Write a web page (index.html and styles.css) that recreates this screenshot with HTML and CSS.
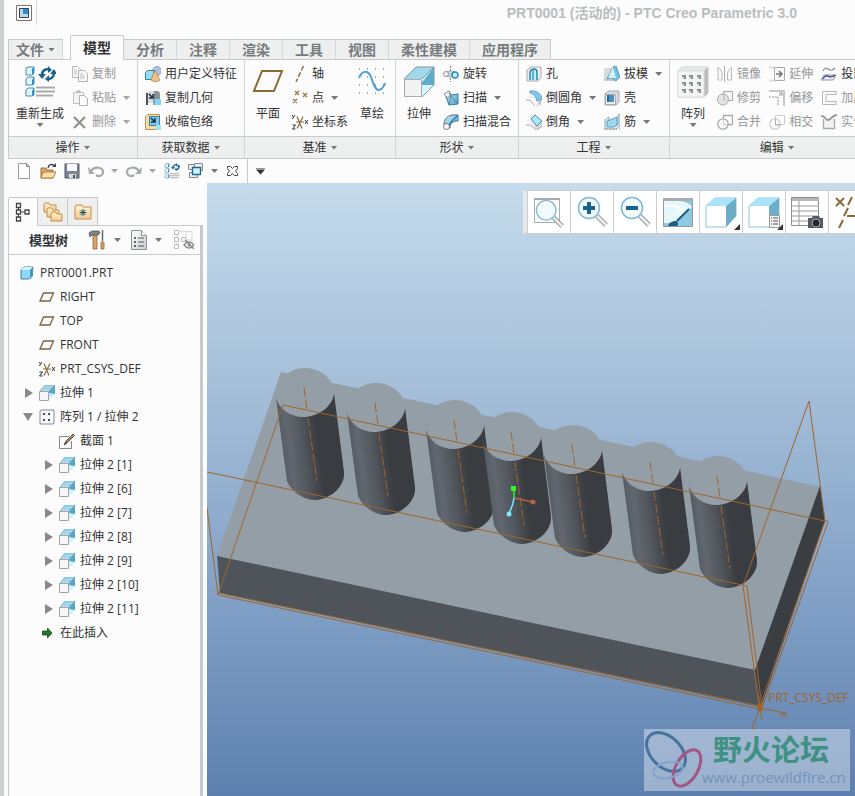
FILE: index.html
```html
<!DOCTYPE html>
<html lang="zh-CN">

<head>
    <meta charset="UTF-8">
    <meta name="viewport" content="width=device-width, initial-scale=1.0">
    <title>PRT0001 (活动的) - PTC Creo Parametric 3.0</title>
    <link rel="stylesheet" href="styles.css">
</head>

<body>
    <!-- Icon sprite -->
    <svg class="sprite" aria-hidden="true">
        <defs>
            <linearGradient id="blue-face" x1="0" y1="0" x2="1" y2="1">
                <stop offset="0" stop-color="#d4f1fb" />
                <stop offset="1" stop-color="#4a9fc4" />
            </linearGradient>
            <linearGradient id="grey-face" x1="0" y1="0" x2="1" y2="1">
                <stop offset="0" stop-color="#ffffff" />
                <stop offset="1" stop-color="#c9cdd0" />
            </linearGradient>
            <linearGradient id="folder-face" x1="0" y1="0" x2="0" y2="1">
                <stop offset="0" stop-color="#fff4d4" />
                <stop offset="1" stop-color="#f0c98c" />
            </linearGradient>

            <symbol id="i-app" viewBox="0 0 16 16"><path d="M.5.5h15v15H.5z" fill="#fff" stroke="#86706f" /><path d="M3.500 3.500h9v9h-9z" fill="#2b8fc5" stroke="#32475a" /><path d="M4 4h3v5h5v3H4z" fill="#c5d5e8" /></symbol>
            <symbol id="i-cube" viewBox="0 0 16 16"><path d="M2 5l3-3h9l-1 9-3 3H2z" fill="#8fd8fa" stroke="#3c7f9e" /><path d="M2 5h9l3-3H5z" fill="#d5f3ff" /><path d="M11 5l3-3v9l-3 3z" fill="#3d9bc8" /></symbol>
            <symbol id="i-extrude" viewBox="0 0 16 16"><path d="M0 6l6-6h10v9l-6 6z" fill="#cdf1fb" /><path d="M6 0h10l-5 5.500H1z" fill="#9ed4ea" /><path d="M10 6l6-6v9l-6-1z" fill="#57a7c9" /><path d="M10 6l6-6v9M1 6l5-6h10" fill="none" stroke="#7f9da8" stroke-width=".6" /><path d="M.5 6.500h9v9h-9z" fill="#f6f6f6" stroke="#a4a4a4" /></symbol>
            <symbol id="i-plane" viewBox="0 0 16 12"><path d="M4.500 2h10l-3.500 8H1z" fill="none" stroke="#7e6039" stroke-width="1.300" /></symbol>
            <symbol id="i-plane-lg" viewBox="0 0 32 32"><path d="M10 5h20l-8 20H2z" fill="none" stroke="#8a6a35" stroke-width="2" /></symbol>
            <symbol id="i-csys" viewBox="0 0 16 16"><path d="M4 8h8M5 2.500l5 12M11 2.500l-6 12" stroke="#8a6c3c" stroke-width="1.200" /><path d="M0 1l1.500 2L3 1M1.500 3L.5 5M13 6l3 4m0-4l-3 4M.5 11h3l-3 4h3" fill="none" stroke="#333" /></symbol>
            <symbol id="i-regen-lg" viewBox="0 0 32 32"><g fill="#dff5fd" stroke="#4f8aa3"><path d="M2 2l2-1h6v6l-2 2H2zM2 13l2-2h6v7l-2 1H2zM2 24l2-2h6v7l-2 1H2z" /></g><path d="M8 3l2-2v6l-2 2zM8 14l2-3v7l-2 1zM8 25l2-3v7l-2 1z" fill="#2f91bc" /><path d="M18 9c0-4 3-6 7-6M30 7c0 4-3 6-6 6" fill="none" stroke="#1c628b" stroke-width="2.500" /><path d="M14 8h8l-4 5zM24 0v7l4-3zM26 8h7l-3-5zM25 9v7l-4-3z" fill="#1c628b" /><path d="M12 21.500h19M12 25.500h19M12 29.500h17" stroke="#aaa" stroke-width="2" /></symbol>
            <symbol id="i-copy" viewBox="0 0 16 16"><g fill="#fbfbfb" stroke="#b5b5b5"><path d="M.5.5h5l3 3v8h-8z" /><path d="M6.500 4.500h6l3 3v8h-9z" /></g><path d="M8 8h3m-3 2h5m-5 2h5M2 4h3M2 6h3M2 8h3" stroke="#bbb" /></symbol>
            <symbol id="i-paste" viewBox="0 0 16 16"><path d="M1.500 2.500h10v11h-10z" fill="#f4f4f4" stroke="#c1c1c1" /><path d="M4 3c0-4 5-4 5 0z" fill="#bbb" /><path d="M7.500 5.500h5l3 3v7h-8z" fill="#fff" stroke="#b5b5b5" /></symbol>
            <symbol id="i-delete" viewBox="0 0 16 16"><path d="M2 3l11 11M13 3L2 14" stroke="#909090" stroke-width="2.200" /></symbol>
            <symbol id="i-udf" viewBox="0 0 16 16"><circle cx="12" cy="5" r="4.500" fill="#a9c3e4" stroke="#7892b5" stroke-width=".7" /><path d="M.5 6.500l2-2H9v8l-2 1H.5z" fill="#93dcf5" stroke="#3c819c" /><path d="M10 4l5 10c-2 2-7 2-9 0z" fill="#efc189" stroke="#a3794c" stroke-width=".7" /></symbol>
            <symbol id="i-copygeom" viewBox="0 0 16 16"><path d="M1 3l3-2h9v6l-3 6H1z" fill="#d9dbde" /><path d="M1 3h2v12H1z" fill="#4a4f58" /><path d="M4 4l4 4m0-4v4H4" fill="none" stroke="#1f2b38" stroke-width="1.500" /><path d="M9 1h4l2 2v6H9z" fill="#8d929a" /><path d="M10 9h6v6h-6z" fill="#7ed5f5" /><path d="M9 4v11" stroke="#31607a" /></symbol>
            <symbol id="i-shrink" viewBox="0 0 16 16"><path d="M.5 2.500l2-2h12v12l-3 3H.5z" fill="#f6dba3" stroke="#b6955c" /><path d="M4.500 2.500h10v9h-10z" fill="#7ec8e8" stroke="#3b7ea5" /><path d="M6 4l4 4m0-4v4H6" fill="none" stroke="#16324a" stroke-width="1.500" /><path d="M11 11h5v5h-5z" fill="#9be4fb" /></symbol>
            <symbol id="i-axis" viewBox="0 0 16 16"><path d="M11.500 0L4 16" stroke="#8a6a35" stroke-width="1.400" stroke-dasharray="5 2" /></symbol>
            <symbol id="i-point" viewBox="0 0 16 16"><path d="M3 1l4 4m0-4L3 5M11 3l4 4m0-4l-4 4M1 9l4 4m0-4l-4 4" stroke="#9b773d" stroke-width="1.400" /></symbol>
            <symbol id="i-sketch" viewBox="0 0 32 32"><path d="M3 3h26M3 11h26M3 19h26M3 27h26" stroke="#555" stroke-dasharray="1 7" /><path d="M3 12C6 4 12 4 15 11C18 19 19 23 22 24C25 24 28 21 29 17" fill="none" stroke="#4a9edb" stroke-width="2" /></symbol>
            <symbol id="i-extrude-lg" viewBox="0 0 32 32"><path d="M1 13L13 1h18v18L19 31H1z" fill="#d8f5fc" /><path d="M13 1h18L19 13H1z" fill="#a2d8ec" /><path d="M31 1L17 19h14z" fill="#5eaaca" /><path d="M13 1h18v18L19 31M1 13L13 1M31 1L19 13" fill="none" stroke="#7b99a7" /><path d="M1.500 13.500h17v17h-17z" fill="#f3f3f3" stroke="#aaa" /></symbol>
            <symbol id="i-revolve" viewBox="0 0 16 16"><path d="M7.500 0v16" stroke="#888" stroke-dasharray="2 1" /><ellipse cx="7" cy="8" rx="6" ry="3" fill="#c7d2dc" stroke="#a6aeb4" /><circle cx="3" cy="8" r="2.500" fill="#f4f4f4" stroke="#999" /><circle cx="12" cy="9" r="3" fill="#c2effb" stroke="#3690b3" stroke-width="1.500" /></symbol>
            <symbol id="i-sweep" viewBox="0 0 16 16"><path d="M2 4l4-3 2 4 7-1v10l-9 1z" fill="url(#blue-face)" stroke="#347c9f" /><path d="M1 4l5-3 1 4-2 3z" fill="#f4f4f4" stroke="#8a979d" /><path d="M8 5l-2 10M15 14L8 6" fill="none" stroke="#4a8aa6" /></symbol>
            <symbol id="i-blend" viewBox="0 0 16 16"><path d="M1 11C1 4 6 1 10 1h5v6C10 7 7 9 7 14z" fill="url(#blue-face)" stroke="#536f7b" /><path d="M15 1l-6 6-4 6" fill="none" stroke="#2b88b0" stroke-width="1.500" /><circle cx="3.500" cy="12.500" r="3" fill="#f7f7f7" stroke="#777" /></symbol>
            <symbol id="i-hole" viewBox="0 0 16 16"><path d="M1 4l4-3h10v10l-3 4H1z" fill="#eee" stroke="#a4a8aa" /><path d="M4 14V6c1-4 7-4 7 0v8" fill="#c7eefa" stroke="#2d85ab" stroke-width="1.500" /><path d="M7 4v10" stroke="#5cadd0" stroke-width="2" /></symbol>
            <symbol id="i-round" viewBox="0 0 16 16"><path d="M1 1h7l7 7v8L8 8H1z" fill="url(#grey-face)" /><path d="M4 1c6-1 11 2 12 8l-5 2C10 6 8 4 4 3z" fill="#80c7ed" stroke="#4a8eb5" stroke-width=".7" /><path d="M0 10h4l5 6M16 10l-5 6" fill="none" stroke="#aaa" /></symbol>
            <symbol id="i-chamfer" viewBox="0 0 16 16"><path d="M1 1h7l7 7v4l-4 4-8-8H1z" fill="url(#grey-face)" /><path d="M5 5l4-4 7 6-5 5z" fill="#a9e7fa" stroke="#538ba2" /><path d="M0 11h4l6 5M16 8v4l-5 4" fill="none" stroke="#aaa" /></symbol>
            <symbol id="i-draft" viewBox="0 0 16 16"><path d="M0 2h8l-3 11H0z" fill="#d8dadb" /><path d="M9 1l3-1 4 11-4 4-5-3-4 1z" fill="#74c0e3" stroke="#3580a3" stroke-width=".7" /><path d="M9 1L4 12h8z" fill="#d3f1fb" /><path d="M0 14h10" stroke="#999" /></symbol>
            <symbol id="i-shell" viewBox="0 0 16 16"><path d="M1 4l3-3h11v11l-3 3H1z" fill="#d6dadd" stroke="#a3abb0" /><path d="M1.500 4.500h10v10h-10z" fill="#eee" stroke="#aaa" /><path d="M3 5h7v7H3z" fill="#4a8fbe" /><path d="M3 5h2v7H3z" fill="#2a6795" /></symbol>
            <symbol id="i-rib" viewBox="0 0 16 16"><path d="M1 6l4-3v8h9V1l2-1v12l-4 3H1z" fill="#dff2f8" stroke="#849197" stroke-width=".8" /><path d="M3 7l3-1 7-3v8l-3 2H3z" fill="#9bdaf0" stroke="#408eae" stroke-width=".8" /><path d="M0 15h16" stroke="#888" stroke-dasharray="1 2" /></symbol>
            <symbol id="i-pattern-lg" viewBox="0 0 32 32"><path d="M1 5l4-4h26v26l-4 4H1z" fill="#b9bdbd" stroke="#c3c3c3" /><path d="M1 5l4-4h26l-4 4z" fill="#e7e8e8" /><path d="M1 5h26v26H1z" fill="#f3f4f4" stroke="#ddd" /><g fill="#8b9093"><path d="M5 9h4v4H5zM12 9h4v4h-4zM20 9h4v4h-4zM5 16h4v4H5zM12 16h4v4h-4zM20 16h4v4h-4zM5 23h4v4H5zM12 23h4v4h-4zM20 23h4v4h-4z" /></g><g fill="#d9d9d9"><path d="M5 11h2v2H5zM12 11h2v2h-2zM20 11h2v2h-2zM5 18h2v2H5zM12 18h2v2h-2zM20 18h2v2h-2zM5 25h2v2H5zM12 25h2v2h-2zM20 25h2v2h-2z" /></g></symbol>
            <symbol id="i-mirror" viewBox="0 0 16 16"><path d="M7.500 0v16" stroke="#aaa" /><path d="M1 1v13h4V8c0-3-2-5-4-7zM14.500 1v13h-4V8c0-3 2-5 4-7z" fill="#fafafa" stroke="#bbb" /></symbol>
            <symbol id="i-trim" viewBox="0 0 16 16"><path d="M6.500 1.500h9v9h-9z" fill="#f7f7f7" stroke="#aaa" /><circle cx="6" cy="9.500" r="5.500" fill="#ddd" fill-opacity=".7" stroke="#aaa" /><path d="M7 10V2" stroke="#bbb" /></symbol>
            <symbol id="i-merge" viewBox="0 0 16 16"><path d="M6.500 1.500h9v9h-9z" fill="#fff" stroke="#aaa" stroke-width="1.300" /><circle cx="6" cy="10" r="5.200" fill="#fff" fill-opacity=".5" stroke="#aaa" stroke-width="1.300" /></symbol>
            <symbol id="i-extend" viewBox="0 0 16 16"><path d="M0 1.500h6M0 14.500h6" stroke="#ddd" stroke-width="2" /><path d="M5.500 1.500h10v13h-10z" fill="#fafafa" stroke="#aaa" /><path d="M7 8h5M10 5l3 3-3 3" fill="none" stroke="#777" stroke-width="1.500" /></symbol>
            <symbol id="i-offset" viewBox="0 0 16 16"><path d="M0 1h15v15" fill="none" stroke="#b5b5b5" stroke-width="1.500" /><path d="M0 7h9v9" fill="none" stroke="#999" stroke-dasharray="2 1" /><path d="M10 6l3-3m-3 0h3v3" fill="none" stroke="#999" /></symbol>
            <symbol id="i-intersect" viewBox="0 0 16 16"><path d="M6.500 1.500h9v9h-9z" fill="#fff" stroke="#ccc" /><circle cx="6" cy="10" r="5.200" fill="none" stroke="#ccc" stroke-width="1.300" /><path d="M6.500 5v6h5" fill="none" stroke="#aaa" /></symbol>
            <symbol id="i-project" viewBox="0 0 16 16"><path d="M2 5c4-8 6 4 12-3" fill="none" stroke="#8f8f8f" stroke-width="1.300" /><path d="M0 14l3-5h12l-3 5z" fill="#eef1f9" stroke="#7b7881" stroke-width=".8" /><path d="M2 13c4-8 6 2 12-4" fill="none" stroke="#4a4890" stroke-width="1.300" /></symbol>
            <symbol id="i-thicken" viewBox="0 0 16 16"><path d="M15 1.500H1.500v13H15M15 4.500H5v7h10M15 1v4m0 6v4" fill="none" stroke="#b7b7b7" /></symbol>
            <symbol id="i-solidify" viewBox="0 0 16 16"><path d="M2.500 5v9.500h11V5" fill="#f2f2f2" stroke="#aaa" stroke-width="1.300" /><path d="M0 2c4-1 4 4 7 4s4-5 9-5" fill="none" stroke="#999" stroke-width="2" /></symbol>
            <symbol id="i-new" viewBox="0 0 16 16"><path d="M2.500.5h8l3 3v12h-11z" fill="#fff" stroke="#999" /><path d="M10.500.5v3h3" fill="none" stroke="#777" /></symbol>
            <symbol id="i-open" viewBox="0 0 16 16"><path d="M1 5h5l1 2h6v8H1z" fill="#d9a868" stroke="#9b7340" /><path d="M3 9h13l-3 6H1z" fill="#ffdda7" stroke="#ae8049" /><path d="M8 5c1-4 3-4 6-3" fill="none" stroke="#445" stroke-width="1.500" /><path d="M12 4h4V0z" fill="#445" /></symbol>
            <symbol id="i-save" viewBox="0 0 16 16"><path d="M1 1h14v14H1z" fill="#7b8791" stroke="#505b67" /><path d="M3 1h10v7H3z" fill="#f7f7f8" /><path d="M5 11h7v4H5z" fill="#d7dbe0" /><path d="M9 12h2v3H9z" fill="#485362" /></symbol>
            <symbol id="i-undo" viewBox="0 0 16 16"><path d="M3 8c3-5 12-4 12 1 0 4-4 5-7 3" fill="none" stroke="#a3a8ac" stroke-width="2.200" /><path d="M0 4l1 7h6z" fill="#a3a8ac" /></symbol>
            <symbol id="i-redo" viewBox="0 0 16 16"><path d="M13 8C10 3 1 4 1 9c0 4 4 5 7 3" fill="none" stroke="#a3a8ac" stroke-width="2.200" /><path d="M16 4l-1 7H9z" fill="#a3a8ac" /></symbol>
            <symbol id="i-windows" viewBox="0 0 16 16"><path d="M6.500.5h8v7h-8zM.5 1.500h6v5h-6zM1.500 9.500h8v5h-8z" fill="#eee" stroke="#888" /><path d="M4.500 4.500h8v7h-8z" fill="#d3f0fb" stroke="#22678f" stroke-width="1.300" /></symbol>
            <symbol id="i-close" viewBox="0 0 13 16"><path d="M1.500 3.500h3l2 2 2-2h3v2l-2 2.500 2 2.500v2h-3l-2-2-2 2h-3v-2l2-2.500-2-2.500z" fill="#fff" stroke="#444" /></symbol>
            <symbol id="i-tree" viewBox="0 0 16 20"><path d="M3.500 5v10M4 10h8" stroke="#444" /><g fill="#fff" stroke="#444" stroke-width="1.300"><path d="M1.500 1.500h4v4h-4zM1.500 8h4v4h-4zM1.500 15h4v4h-4zM10 8h4v4h-4z" /></g></symbol>
            <symbol id="i-folders" viewBox="0 0 20 20"><g fill="url(#folder-face)" stroke="#c78b4c"><path d="M1 2l1-1h4l1 2h6v7H1z" /><path d="M4 7l1-1h4l1 2h6v7H4z" /><path d="M8 12l1-2h4l1 2h5v7H8z" /></g></symbol>
            <symbol id="i-favourites" viewBox="0 0 20 20"><path d="M2 5l1-2h6l1 2h8v12H2z" fill="url(#folder-face)" stroke="#c78b4c" /><path d="M10 7v7M6.500 10.500h7M7.500 8l5 5m0-5l-5 5" stroke="#17547a" /></symbol>
            <symbol id="i-tools" viewBox="0 0 20 20"><path d="M5 5h4v14H5z" fill="#dca363" stroke="#91683e" stroke-width=".8" /><path d="M1 3l3-2h7l1 2-2 2H4L2 7z" fill="#7e858c" stroke="#555" stroke-width=".8" /><path d="M14.500 0v11" stroke="#666" stroke-width="1.500" /><path d="M13 12h3v7h-3z" fill="#dca363" stroke="#91683e" stroke-width=".8" /></symbol>
            <symbol id="i-list" viewBox="0 0 16 20"><path d="M.5.5h10l5 5v14H.5z" fill="url(#grey-face)" stroke="#8c9298" /><path d="M10.500.5v5h5" fill="#fff" stroke="#8c9298" /><path d="M7 8h6M7 12h6M7 16h6" stroke="#555" /><path d="M3 7h2v2H3zM3 11h2v2H3zM3 15h2v2H3z" fill="#666" /></symbol>
            <symbol id="i-hide" viewBox="0 0 20 20"><path d="M3 4v13M4 9h5M6 1.500h12M7 10h11M12 1v12M18 1v10" fill="none" stroke="#ccc" stroke-dasharray="2 1" /><path d="M.5.500h4v4h-4zM.5 7.500h4v4h-4zM.5 14.500h4v4h-4zM8 7.500h4v4H8z" fill="#fff" stroke="#bbb" /><path d="M10 15c3-4 7-4 10 0-3 4-7 4-10 0zM11 10l9 9" fill="none" stroke="#888" stroke-width="1.300" /><circle cx="15" cy="15" r="1.500" fill="#888" /></symbol>
            <symbol id="i-pattern" viewBox="0 0 16 16"><path d="M1 2l1-1h13v13l-1 1H1z" fill="#fafafa" stroke="#8887a0" /><path d="M4 4h2v2H4zM9 4h2v2H9zM4 10h2v2H4zM9 10h2v2H9z" fill="#4d4b66" /></symbol>
            <symbol id="i-section" viewBox="0 0 16 16"><path d="M10 3.500H.5v12h12V8" fill="none" stroke="#888" /><path d="M5 12l2-4 7-7 1.500 1.500-7 7z" fill="#b58f5f" stroke="#464646" stroke-width=".9" /><path d="M5 12l2-3 1 1z" fill="#333" /></symbol>
            <symbol id="i-insert" viewBox="-3 -2 16 16"><path d="M.5 4h5V1l4.500 5-4.500 5V8h-5z" fill="#267226" stroke="#174e17" stroke-width=".8" /></symbol>
            <symbol id="i-glass" viewBox="0 0 32 32"><path d="M21 20l9 9" stroke="#9ca1a6" stroke-width="5" /><path d="M21 20l9 9" stroke="#eee" stroke-width="2.500" /><circle cx="13" cy="12" r="10.500" fill="#eefaff" fill-opacity=".85" stroke="#82b6d3" stroke-width="1.500" /></symbol>
            <symbol id="i-refit" viewBox="0 0 32 32"><path d="M1.500 2.500h25v24h-25z" fill="#fff" stroke="#aaa" /><path d="M1 2h26v2H1z" fill="#a7abae" /><use href="#i-glass" y="3" width="32" height="30" /></symbol>
            <symbol id="i-zoomin" viewBox="0 0 32 32"><use href="#i-glass" width="32" height="32" /><path d="M7 12h12M13 6v12" stroke="#17638e" stroke-width="4" /></symbol>
            <symbol id="i-zoomout" viewBox="0 0 32 32"><use href="#i-glass" width="32" height="32" /><path d="M7 12h12" stroke="#17638e" stroke-width="4" /></symbol>
            <symbol id="i-repaint" viewBox="0 0 32 32"><path d="M1.500 2.500h29v28h-29z" fill="#8dc9e2" stroke="#929a9e" /><path d="M2 5h16c5 0 10 3 12 6L11 27H2z" fill="#e8f7fc" /><path d="M1 2h30v3H1z" fill="#a7adb0" /><path d="M3 10c10-2 16 2 20 8" fill="none" stroke="#fff" stroke-width="2" /><path d="M27 13L15 25" stroke="#1d5c84" stroke-width="2" /><path d="M6 30c2-5 6-5 8-5 3 1 2 5 1 5z" fill="#1e5d88" /></symbol>
            <symbol id="i-display" viewBox="0 0 32 32"><path d="M1 10l9-8h21v18L21 31H1z" fill="#fff" stroke="#8cc3da" /><path d="M1 10l9-8h21l-10 8z" fill="#abe4fa" /><path d="M21 10L31 2v18L21 31z" fill="#6caec9" /></symbol>
            <symbol id="i-saved" viewBox="0 0 32 32"><use href="#i-display" width="32" height="32" /><path d="M21.500 19.500h10v12h-10z" fill="#f4f4f4" stroke="#999" /><path d="M25 22h5M25 25h5M25 28h5" stroke="#555" /><path d="M23 22h1M23 25h1M23 28h1" stroke="#555" /></symbol>
            <symbol id="i-views" viewBox="0 0 32 32"><path d="M.5 1.500h27v28H.5z" fill="#fff" stroke="#8d8d8d" /><path d="M1 2h27v3H1z" fill="#b7b7b7" /><path d="M8 5v25M1 10h27M1 15h27M1 20h27M1 25h27" stroke="#999" /><path d="M17 22h4l1-2h6l1 2h3v10H17z" fill="#555a60" /><circle cx="25" cy="27" r="4" fill="#24282c" stroke="#a5abb0" /></symbol>
            <symbol id="i-datums" viewBox="0 0 32 32"><path d="M2 2l8 8m0-8l-8 8M18 1l-4 8M14 12l-4 8M9 24l-4 8M13 20h15M22 12l8 16" stroke="#8a6a35" stroke-width="2" /></symbol>
        </defs>
    </svg>

    <div class="window">
        <header class="titlebar">
            <svg class="icon"><use href="#i-app" /></svg>
            <h1>PRT0001 (活动的) - PTC Creo Parametric 3.0</h1>
        </header>

        <nav class="tabs">
            <button class="tab file">文件<span class="arrow"></span></button>
            <button class="tab active">模型</button>
            <button class="tab">分析</button>
            <button class="tab">注释</button>
            <button class="tab">渲染</button>
            <button class="tab">工具</button>
            <button class="tab">视图</button>
            <button class="tab">柔性建模</button>
            <button class="tab">应用程序</button>
        </nav>

        <div class="ribbon">
            <section class="group">
                <div class="tools">
                    <button class="big"><svg><use href="#i-regen-lg" /></svg>重新生成<span class="arrow"></span></button>
                    <div class="column">
                        <button class="tool off"><svg class="icon"><use href="#i-copy" /></svg>复制</button>
                        <button class="tool off"><svg class="icon"><use href="#i-paste" /></svg>粘贴<span class="arrow"></span></button>
                        <button class="tool off"><svg class="icon"><use href="#i-delete" /></svg>删除<span class="arrow"></span></button>
                    </div>
                </div>
                <button class="group-name">操作<span class="arrow"></span></button>
            </section>
            <section class="group">
                <div class="tools">
                    <div class="column">
                        <button class="tool"><svg class="icon"><use href="#i-udf" /></svg>用户定义特征</button>
                        <button class="tool"><svg class="icon"><use href="#i-copygeom" /></svg>复制几何</button>
                        <button class="tool"><svg class="icon"><use href="#i-shrink" /></svg>收缩包络</button>
                    </div>
                </div>
                <button class="group-name">获取数据<span class="arrow"></span></button>
            </section>
            <section class="group">
                <div class="tools">
                    <button class="big"><svg><use href="#i-plane-lg" /></svg>平面</button>
                    <div class="column">
                        <button class="tool"><svg class="icon"><use href="#i-axis" /></svg>轴</button>
                        <button class="tool"><svg class="icon"><use href="#i-point" /></svg>点<span class="arrow"></span></button>
                        <button class="tool"><svg class="icon"><use href="#i-csys" /></svg>坐标系</button>
                    </div>
                    <button class="big"><svg><use href="#i-sketch" /></svg>草绘</button>
                </div>
                <button class="group-name">基准<span class="arrow"></span></button>
            </section>
            <section class="group">
                <div class="tools">
                    <button class="big"><svg><use href="#i-extrude-lg" /></svg>拉伸</button>
                    <div class="column">
                        <button class="tool"><svg class="icon"><use href="#i-revolve" /></svg>旋转</button>
                        <button class="tool"><svg class="icon"><use href="#i-sweep" /></svg>扫描<span class="arrow"></span></button>
                        <button class="tool"><svg class="icon"><use href="#i-blend" /></svg>扫描混合</button>
                    </div>
                </div>
                <button class="group-name">形状<span class="arrow"></span></button>
            </section>
            <section class="group">
                <div class="tools">
                    <div class="column">
                        <button class="tool"><svg class="icon"><use href="#i-hole" /></svg>孔</button>
                        <button class="tool"><svg class="icon"><use href="#i-round" /></svg>倒圆角<span class="arrow"></span></button>
                        <button class="tool"><svg class="icon"><use href="#i-chamfer" /></svg>倒角<span class="arrow"></span></button>
                    </div>
                    <div class="column">
                        <button class="tool"><svg class="icon"><use href="#i-draft" /></svg>拔模<span class="arrow"></span></button>
                        <button class="tool"><svg class="icon"><use href="#i-shell" /></svg>壳</button>
                        <button class="tool"><svg class="icon"><use href="#i-rib" /></svg>筋<span class="arrow"></span></button>
                    </div>
                </div>
                <button class="group-name">工程<span class="arrow"></span></button>
            </section>
            <section class="group">
                <div class="tools">
                    <button class="big"><svg><use href="#i-pattern-lg" /></svg>阵列<span class="arrow"></span></button>
                    <div class="column">
                        <button class="tool off"><svg class="icon"><use href="#i-mirror" /></svg>镜像</button>
                        <button class="tool off"><svg class="icon"><use href="#i-trim" /></svg>修剪</button>
                        <button class="tool off"><svg class="icon"><use href="#i-merge" /></svg>合并</button>
                    </div>
                    <div class="column">
                        <button class="tool off"><svg class="icon"><use href="#i-extend" /></svg>延伸</button>
                        <button class="tool off"><svg class="icon"><use href="#i-offset" /></svg>偏移</button>
                        <button class="tool off"><svg class="icon"><use href="#i-intersect" /></svg>相交</button>
                    </div>
                    <div class="column">
                        <button class="tool"><svg class="icon"><use href="#i-project" /></svg>投影</button>
                        <button class="tool off"><svg class="icon"><use href="#i-thicken" /></svg>加厚</button>
                        <button class="tool off"><svg class="icon"><use href="#i-solidify" /></svg>实体化</button>
                    </div>
                </div>
                <button class="group-name">编辑<span class="arrow"></span></button>
            </section>
        </div>

        <div class="quickbar">
            <button aria-label="新建"><svg class="icon"><use href="#i-new" /></svg></button>
            <button aria-label="打开"><svg class="icon"><use href="#i-open" /></svg></button>
            <button aria-label="保存"><svg class="icon"><use href="#i-save" /></svg></button>
            <button class="off" aria-label="撤消"><svg class="icon"><use href="#i-undo" /></svg><span class="arrow"></span></button>
            <button class="off" aria-label="重做"><svg class="icon"><use href="#i-redo" /></svg><span class="arrow"></span></button>
            <button aria-label="重新生成"><svg class="icon"><use href="#i-regen-lg" /></svg></button>
            <button aria-label="窗口"><svg class="icon"><use href="#i-windows" /></svg><span class="arrow"></span></button>
            <button class="close" aria-label="关闭"><svg><use href="#i-close" /></svg></button>
            <button class="more" aria-label="自定义"><span class="arrow"></span></button>
        </div>

        <main>
            <aside>
                <div class="side-tabs">
                    <button class="active" aria-label="模型树"><svg><use href="#i-tree" /></svg></button>
                    <button aria-label="文件夹"><svg><use href="#i-folders" /></svg></button>
                    <button aria-label="收藏夹"><svg><use href="#i-favourites" /></svg></button>
                </div>
                <div class="panel">
                    <div class="panel-head">
                        <h2>模型树</h2>
                        <button aria-label="设置"><svg><use href="#i-tools" /></svg><span class="arrow"></span></button>
                        <button aria-label="显示"><svg><use href="#i-list" /></svg><span class="arrow"></span></button>
                        <button aria-label="隐藏"><svg><use href="#i-hide" /></svg></button>
                    </div>
                    <ul class="tree">
                        <li><div class="node"><svg class="icon"><use href="#i-cube" /></svg>PRT0001.PRT</div>
                            <ul>
                                <li><div class="node"><svg class="icon"><use href="#i-plane" /></svg>RIGHT</div></li>
                                <li><div class="node"><svg class="icon"><use href="#i-plane" /></svg>TOP</div></li>
                                <li><div class="node"><svg class="icon"><use href="#i-plane" /></svg>FRONT</div></li>
                                <li><div class="node"><svg class="icon"><use href="#i-csys" /></svg>PRT_CSYS_DEF</div></li>
                                <li><div class="node closed"><svg class="icon"><use href="#i-extrude" /></svg>拉伸 1</div></li>
                                <li><div class="node open"><svg class="icon"><use href="#i-pattern" /></svg>阵列 1 / 拉伸 2</div>
                                    <ul>
                                        <li><div class="node"><svg class="icon"><use href="#i-section" /></svg>截面 1</div></li>
                                        <li><div class="node closed"><svg class="icon"><use href="#i-extrude" /></svg>拉伸 2 [1]</div></li>
                                        <li><div class="node closed"><svg class="icon"><use href="#i-extrude" /></svg>拉伸 2 [6]</div></li>
                                        <li><div class="node closed"><svg class="icon"><use href="#i-extrude" /></svg>拉伸 2 [7]</div></li>
                                        <li><div class="node closed"><svg class="icon"><use href="#i-extrude" /></svg>拉伸 2 [8]</div></li>
                                        <li><div class="node closed"><svg class="icon"><use href="#i-extrude" /></svg>拉伸 2 [9]</div></li>
                                        <li><div class="node closed"><svg class="icon"><use href="#i-extrude" /></svg>拉伸 2 [10]</div></li>
                                        <li><div class="node closed"><svg class="icon"><use href="#i-extrude" /></svg>拉伸 2 [11]</div></li>
                                    </ul>
                                </li>
                                <li><div class="node"><svg class="icon"><use href="#i-insert" /></svg>在此插入</div></li>
                            </ul>
                        </li>
                    </ul>
                </div>
            </aside>

            <div class="viewport">
                <svg class="scene" viewBox="207 183 648 613" preserveAspectRatio="xMinYMin slice">
                    <defs>
                        <linearGradient id="shade" gradientUnits="userSpaceOnUse" x1="-24" y1="54" x2="34" y2="47">
                            <stop offset="0" stop-color="#565c63" />
                            <stop offset=".15" stop-color="#60676f" />
                            <stop offset=".4" stop-color="#50555c" />
                            <stop offset=".6" stop-color="#3d4044" />
                            <stop offset=".64" stop-color="#393c40" />
                            <stop offset="1" stop-color="#393c40" />
                        </linearGradient>
                        <g id="post">
                            <path d="M-29 6L-18 89C-13 101 0 108 10 108C21 108 37 99 39 84V80L29 1V2C27 15 13 25-2 25C-14 25-26 17-29 6z" fill="url(#shade)" />
                            <path d="M-1-4L2 18M3 26L12 89" stroke="#a0652c" stroke-dasharray="9 3" />
                        </g>
                    </defs>
                    <!-- Base plate -->
                    <path d="M281 372L821 487L755 670L217 556z" fill="#949ea6" />
                    <path d="M217 556L755 670L761 707L220 593z" fill="#4f545b" />
                    <path d="M820 486L825 521L761 707L755 670z" fill="#3a3d41" />
                    <g fill="#949ea6">
                        <ellipse cx="305" cy="393" rx="29" ry="25" />
                        <ellipse cx="376" cy="408" rx="29" ry="25" />
                        <ellipse cx="455" cy="425" rx="29" ry="25" />
                        <ellipse cx="512" cy="437" rx="29" ry="25" />
                        <ellipse cx="573" cy="450" rx="29" ry="25" />
                        <ellipse cx="651" cy="467" rx="29" ry="25" />
                        <ellipse cx="718" cy="481" rx="29" ry="25" />
                    </g>
                    <!-- Patterned posts -->
                    <use href="#post" x="305" y="392" />
                    <use href="#post" x="376" y="407" />
                    <use href="#post" x="455" y="424" />
                    <use href="#post" x="512" y="436" />
                    <use href="#post" x="573" y="449" />
                    <use href="#post" x="651" y="466" />
                    <use href="#post" x="718" y="480" />
                    <!-- Datum planes -->
                    <g fill="none" stroke="#a0652c">
                        <path d="M207 472L747 586L762 708M743 586L759 706M207 508L218 595L283 405L825 521L809 401L743 586" />
                        <path d="M218 595L760 709M219 593L760 706M825 521L760 706M828 522L762 708M825 521h3" />
                        <path d="M760 708L786 713M760 708L752 728M758 694L762 720M751 729h5M780 712l7 5m0-5l-7 5" />
                    </g>
                    <path d="M757 705l3-2 3 2v5l-3 2-3-2z" fill="#a0652c" />
                    <text x="768" y="702">PRT_CSYS_DEF</text>
                    <!-- Spin centre -->
                    <g fill="none" stroke-width="1.500">
                        <path d="M514 488V498" stroke="#35f52e" />
                        <path d="M514 498L533 502" stroke="#b36443" />
                        <path d="M514 498Q513 506 509 513" stroke="#73ecfa" />
                    </g>
                    <path d="M511 486h5v5h-5z" fill="#35f52e" />
                    <circle cx="533" cy="502" r="2.500" fill="#b36443" />
                    <circle cx="509" cy="514" r="2.500" fill="#73ecfa" />
                </svg>

                <div class="view-tools">
                    <button aria-label="重新调整"><svg><use href="#i-refit" /></svg></button>
                    <button aria-label="放大"><svg><use href="#i-zoomin" /></svg></button>
                    <button aria-label="缩小"><svg><use href="#i-zoomout" /></svg></button>
                    <button aria-label="重画"><svg><use href="#i-repaint" /></svg></button>
                    <button class="menu" aria-label="显示样式"><svg><use href="#i-display" /></svg></button>
                    <button class="menu" aria-label="已保存方向"><svg><use href="#i-saved" /></svg></button>
                    <button aria-label="视图管理器"><svg><use href="#i-views" /></svg></button>
                    <button aria-label="基准显示"><svg><use href="#i-datums" /></svg></button>
                </div>

                <div class="watermark">
                    <svg viewBox="0 0 60 60">
                        <g fill="none">
                            <ellipse cx="22" cy="22" rx="23" ry="15" transform="rotate(45 22 22)" stroke="#47749f" stroke-width="3" />
                            <ellipse cx="43" cy="38" rx="20" ry="11" transform="rotate(-60 43 38)" stroke="#a25587" stroke-width="3" />
                            <ellipse cx="24" cy="40" rx="15" ry="8" transform="rotate(-12 24 40)" stroke="#83a3cb" stroke-width="2" />
                        </g>
                    </svg>
                    <div>
                        <strong>野火论坛</strong>
                        <a href="#">www.proewildfire.cn</a>
                    </div>
                </div>
            </div>
        </main>
    </div>
</body>

</html>
```

FILE: styles.css
```css
* {
    box-sizing: border-box;
}

body {
    margin: 0;
    background-color: #fcfcfd;
    font-family: "Open Sans", "Noto Sans CJK SC", sans-serif;
    font-size: 12px;
    line-height: 16px;
    color: #333;
}

button {
    margin: 0;
    padding: 0;
    border: 0;
    background: none;
    font: inherit;
    color: inherit;
    white-space: nowrap;
    cursor: pointer;
}

svg {
    display: block;
    flex: none;
}

.sprite {
    position: absolute;
    width: 0;
    height: 0;
}

.icon {
    width: 16px;
    height: 16px;
}

/* Small drop-down triangle */
.arrow {
    flex: none;
    width: 7px;
    height: 4px;
    background-color: #777;
    clip-path: polygon(0 0, 100% 0, 50% 100%);
}

.window {
    display: flex;
    flex-direction: column;
    height: 100vh;
    padding-left: 4px;
    border-left: 4px solid #cbcfcf;
    overflow: hidden;
}

/* Title bar */
.titlebar {
    display: flex;
    align-items: center;
    flex: none;
    height: 39px;
    padding: 0 58px 14px 8px;
}

.titlebar .icon {
    box-sizing: content-box;
    padding: 4px 4px 4px 0;
    border-right: 1px solid #d5d7d8;
}

.titlebar h1 {
    margin: 0 0 0 auto;
    font-family: "Liberation Sans", "Noto Sans CJK SC", sans-serif;
    font-size: 14px;
    line-height: 16px;
    color: #b9bcbd;
    white-space: nowrap;
}

/* Ribbon tabs */
.tabs {
    display: flex;
    align-items: flex-end;
    flex: none;
    height: 20px;
}

.tab {
    height: 20px;
    padding: 0 12px;
    border-top: 1px solid #c6cacc;
    border-right: 1px solid #d5d8d9;
    background-color: #eef0f0;
    font-size: 14px;
    font-weight: bold;
    line-height: 18px;
    color: #777b7e;
}

.tab.file {
    display: flex;
    align-items: center;
    gap: 4px;
    margin-right: 7px;
    padding: 0 7px;
    border-left: 1px solid #c6cacc;
}

.tab.active {
    position: relative;
    height: 25px;
    margin-bottom: -1px;
    border: 1px solid #c6cacc;
    border-bottom: 0;
    border-radius: 2px 2px 0 0;
    background-color: #fcfcfd;
    color: #333;
}

.tab:last-child {
    border-right-color: #c6cacc;
}

/* Ribbon */
.ribbon {
    display: flex;
    flex: none;
    border: solid #c6cacc;
    border-width: 1px 0 1px 1px;
    overflow: hidden;
}

.group {
    display: flex;
    flex-direction: column;
    flex: none;
    border-right: 1px solid #d0d4d5;
}

.tools {
    display: flex;
    gap: 8px;
    height: 76px;
    padding: 2px 7px 0;
}

.column {
    display: flex;
    flex-direction: column;
}

.tool {
    display: flex;
    align-items: center;
    gap: 4px;
    height: 24px;
}

.tool .arrow {
    margin-left: 3px;
}

.big {
    display: flex;
    flex-direction: column;
    align-items: center;
    min-width: 32px;
    padding-top: 4px;
}

.big svg {
    width: 32px;
    height: 32px;
    margin-bottom: 8px;
}

.big .arrow {
    margin-top: 1px;
}

.off {
    color: #969696;
}

.off .arrow {
    background-color: #a5a5a5;
}

.group-name {
    display: flex;
    align-items: center;
    justify-content: center;
    gap: 4px;
    height: 22px;
    border-top: 1px solid #c6cacc;
    background-color: #eef0f0;
}

/* Quick access toolbar */
.quickbar {
    display: flex;
    align-items: center;
    flex: none;
    gap: 8px;
    height: 24px;
    padding-left: 8px;
}

.quickbar button {
    display: flex;
    align-items: center;
    gap: 7px;
}

.quickbar .close svg {
    width: 13px;
    height: 16px;
}

.quickbar .more {
    height: 24px;
    padding-left: 8px;
    border-left: 1px solid #c6cacc;
}

.more .arrow {
    width: 9px;
    height: 7px;
    background-color: #333;
    clip-path: polygon(0 0, 100% 0, 100% 14%, 0 14%, 0 29%, 100% 29%, 50% 100%, 0 29%);
}

main {
    display: flex;
    flex: 1;
    min-height: 0;
}

/* Navigator */
aside {
    display: flex;
    flex-direction: column;
    flex: none;
    width: 195px;
    margin-right: 4px;
    padding-top: 14px;
}

.side-tabs {
    display: flex;
    flex: none;
    height: 29px;
}

.side-tabs button {
    display: flex;
    align-items: center;
    justify-content: center;
    width: 30px;
    border: solid #c6cacc;
    border-width: 1px 1px 0 0;
    background-color: #eef0f0;
}

.side-tabs .active {
    position: relative;
    border-left-width: 1px;
    border-radius: 2px 2px 0 0;
    background-color: #fcfcfd;
}

.side-tabs svg {
    width: 20px;
    height: 20px;
}

.panel {
    flex: 1;
    border: solid #c6c9cd;
    border-width: 1px 3px 0 1px;
    margin-top: -1px;
}

.panel-head {
    display: flex;
    align-items: center;
    height: 29px;
    gap: 8px;
    padding-left: 20px;
    border-bottom: 1px solid #c6cacc;
}

.panel-head h2 {
    margin: 0 12px 0 0;
    font-size: 13px;
    line-height: 16px;
}

.panel-head button {
    display: flex;
    align-items: center;
    gap: 6px;
}

.panel-head button:last-child {
    margin-left: 4px;
}

.panel-head svg {
    width: 20px;
    height: 20px;
}

.tree,
.tree ul {
    margin: 0;
    padding: 0;
    list-style: none;
}

.tree {
    padding: 6px 0 0 10px;
}

.tree ul {
    padding-left: 20px;
}

.node {
    display: flex;
    align-items: center;
    gap: 5px;
    position: relative;
    height: 24px;
    white-space: nowrap;
}

.node.closed::before,
.node.open::before {
    content: "";
    position: absolute;
    left: -14px;
    width: 8px;
    height: 10px;
    background-color: #898989;
    clip-path: polygon(0 0, 100% 50%, 0 100%);
}

.node.open::before {
    left: -16px;
    width: 10px;
    height: 8px;
    clip-path: polygon(0 0, 100% 0, 50% 100%);
}

/* Graphics window */
.viewport {
    position: relative;
    flex: 1;
    min-width: 0;
    background: linear-gradient(#c6dcec, #a6c0da 32%, #85a3c8 65%, #5d80ae);
    overflow: hidden;
}

.scene {
    width: 100%;
    height: 100%;
}

.scene text {
    font-size: 12px;
    fill: #a0652c;
}

.view-tools {
    display: flex;
    position: absolute;
    top: 7px;
    left: 316px;
    border: 1px solid #cdcdcd;
    border-left: 4px solid #e6e8e9;
    background-color: #fff;
}

.view-tools button {
    position: relative;
    padding: 5px;
    border-left: 1px solid #cdcdcd;
}

.view-tools svg {
    width: 32px;
    height: 32px;
}

.view-tools .menu::after {
    content: "";
    position: absolute;
    right: 2px;
    bottom: 3px;
    width: 6px;
    height: 6px;
    background-color: #333;
    clip-path: polygon(100% 0, 100% 100%, 0 100%);
}

.watermark {
    display: flex;
    align-items: center;
    position: absolute;
    right: 5px;
    bottom: 5px;
    width: 206px;
    height: 62px;
    background-color: rgba(215, 225, 238, 0.5);
}

.watermark svg {
    width: 60px;
    height: 60px;
    margin-right: -2px;
}

.watermark strong {
    display: block;
    padding-left: 11px;
    font-size: 29px;
    line-height: 34px;
    color: #3f9182;
}

.watermark a {
    display: block;
    font-size: 15px;
    line-height: 20px;
    color: #7391bb;
    text-decoration: none;
}
```
